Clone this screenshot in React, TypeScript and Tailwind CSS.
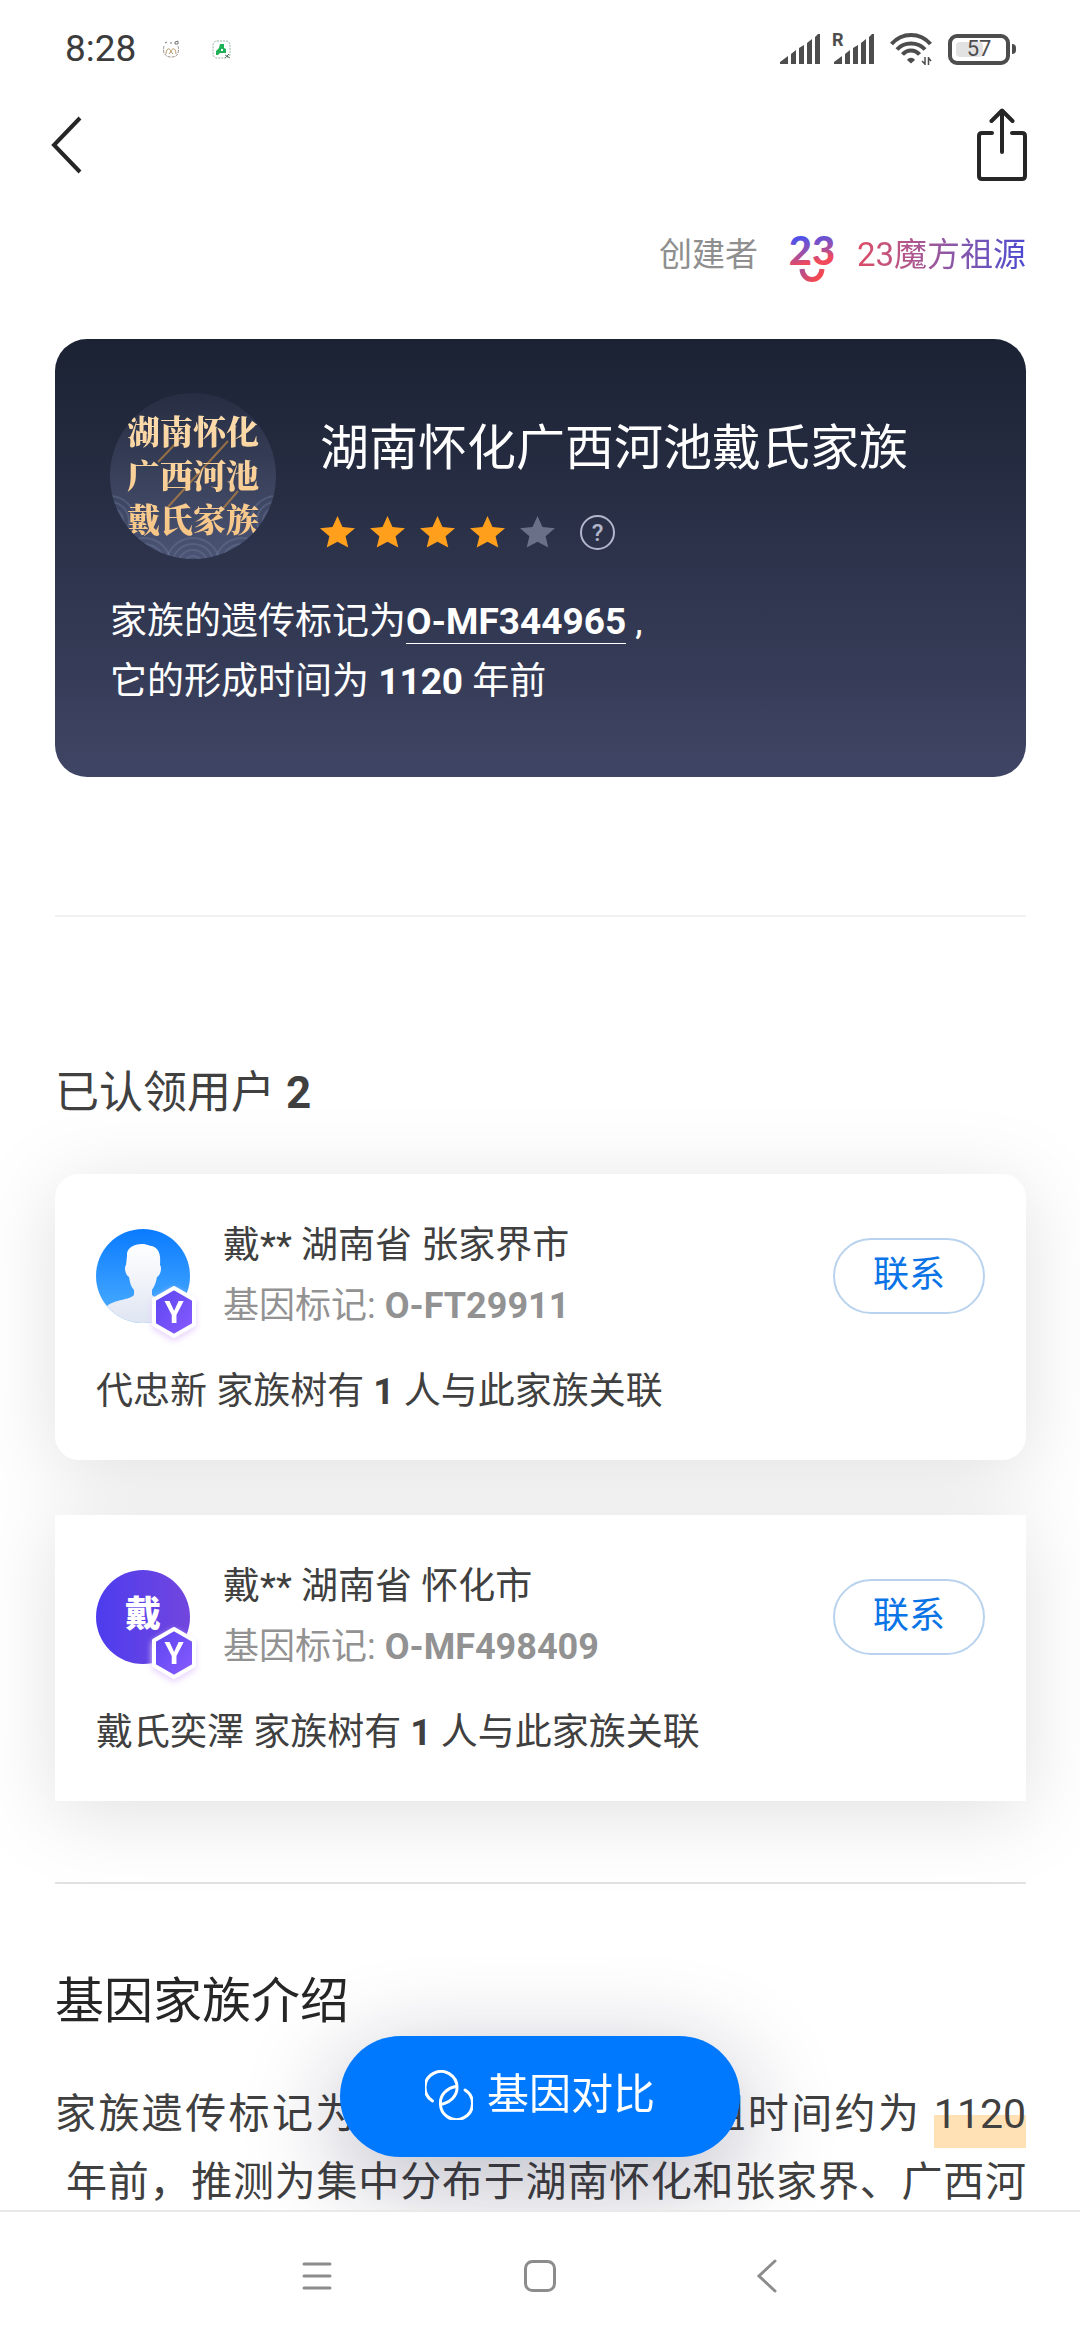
import type { ReactNode } from "react";
import clsx from "clsx";

interface Member {
  name: string;
  marker: string;
  treeOwner: string;
  avatar: ReactNode;
}

const members: Member[] = [
  {
    name: "戴** 湖南省 张家界市",
    marker: "O-FT29911",
    treeOwner: "代忠新",
    avatar: <PersonAvatar />,
  },
  {
    name: "戴** 湖南省 怀化市",
    marker: "O-MF498409",
    treeOwner: "戴氏奕澤",
    avatar: <SurnameAvatar surname="戴" />,
  },
];

function SignalBars() {
  return (
    <svg width="40" height="30" viewBox="0 0 40 30" fill="#4d4d4d">
      <path d="M0 30V28L8 22V30ZM11 30V20L16 16V30ZM19 30V14L24 11V30ZM27 30V9L32 5V30ZM35 30V3L38 0H40V30Z" />
    </svg>
  );
}

function StatusBar() {
  return (
    <div className="flex h-[98px] items-center justify-between pr-16 pl-[65px]">
      <div className="flex items-center">
        <span className="text-[37px] text-[#3c3c3c]">8:28</span>
        <svg className="ml-[26px]" width="18" height="18" viewBox="0 0 18 18" fill="none" stroke="#9a928c">
          <path d="M2 6Q1 9 2 13Q4 17 9 17Q15 17 16 13Q17 9 16 6" strokeDasharray="3 1" />
          <path d="M4 14C4 8 8 7 9 12C10 7 14 8 14 14M7 14Q9 10 11 14" stroke="#b59a6a" />
          <path d="M3 3L5 2M8 3H10M13 2L16 1V4L13 4Z" stroke="#777" />
        </svg>
        <svg className="ml-8" width="19" height="19" viewBox="0 0 19 19" fill="none">
          <rect x="1" y="1" width="17" height="17" rx="4" stroke="#9bb3a4" strokeDasharray="2 1" />
          <path d="M8 4H12V8L14 9V13H8L6 15H4V11L7 8Z" fill="#1fb155" />
          <path d="M9 9H11V11H9Z" fill="#fff" />
          <path d="M13 15L18 18M13 18L17 14" stroke="#5b7a68" />
        </svg>
      </div>
      <div className="flex items-center">
        <SignalBars />
        <div className="relative ml-3.5">
          <SignalBars />
          <span className="absolute -top-1 -left-0.5 text-lg leading-5 font-bold text-[#4d4d4d]">R</span>
        </div>
        <svg className="ml-4" width="42" height="34" viewBox="0 0 42 34" fill="none" stroke="#4d4d4d" strokeWidth="4">
          <path d="M1.500 12C12 0 30 0 40.500 12" />
          <path d="M7 17.500C14 9.500 28 9.500 35 17.500" />
          <path d="M12.500 22.500C17 17 25 17 29.500 22.500" />
          <path d="M17 28C19 25 23 25 25 28L21 31.500Z" fill="#4d4d4d" stroke="none" />
          <path d="M35 25V33M35 32L32 29M38.500 33V25M38.500 26L41 29" strokeWidth="1.500" />
        </svg>
        <div className="ml-4 flex items-center gap-0.5">
          <div className="relative flex h-[31px] w-[62px] items-center justify-center rounded-[9px] border-4 border-[#4d4d4d]">
            <div className="absolute inset-y-1 left-1 w-[27px] rounded-sm bg-[#e2e2e2]" />
            <span className="relative text-[22px] leading-none text-[#4d4d4d]">57</span>
          </div>
          <div className="h-[10px] w-1 rounded-r bg-[#4d4d4d]" />
        </div>
      </div>
    </div>
  );
}

function Header() {
  return (
    <header className="flex h-[94px] items-center justify-between pr-[53px] pl-[51px] text-[#262626]">
      <button type="button" aria-label="返回">
        <svg width="31" height="58" viewBox="0 0 31 58" fill="none" stroke="currentColor" strokeWidth="4">
          <path d="M29 2L3 29L29 56" />
        </svg>
      </button>
      <button type="button" aria-label="分享">
        <svg
          width="50"
          height="74"
          viewBox="0 0 50 74"
          fill="none"
          stroke="currentColor"
          strokeWidth="4"
          strokeLinecap="round"
          strokeLinejoin="round"
        >
          <path d="M15 25H5Q2 25 2 28V68Q2 71 5 71H45Q48 71 48 68V28Q48 25 45 25H35" />
          <path d="M25 44V3M14.500 13L25 2.500L35.500 13" />
        </svg>
      </button>
    </header>
  );
}

function BrandLogo() {
  return (
    <svg width="48" height="66" viewBox="0 0 48 66">
      <defs>
        <linearGradient id="brand" x1="0" y1="0.200" x2="0.200" y2="1">
          <stop offset="0" stopColor="#3a50fa" />
          <stop offset="0.450" stopColor="#8a52b8" />
          <stop offset="0.800" stopColor="#f04a5c" />
        </linearGradient>
        <linearGradient id="smile" x1="0" y1="0" x2="1" y2="0.500">
          <stop offset="0" stopColor="#b04f92" />
          <stop offset="1" stopColor="#f5484f" />
        </linearGradient>
      </defs>
      <text x="24" y="43" textAnchor="middle" fill="url(#brand)" className="font-[Lato] text-[40px] font-black">
        23
      </text>
      <path d="M14 47C15 61 33 61 34 47" fill="none" stroke="url(#smile)" strokeWidth="5" />
    </svg>
  );
}

function FamilyAvatar() {
  return (
    <div className="relative flex size-[166px] shrink-0 items-center justify-center overflow-hidden rounded-full bg-linear-to-b from-[#272e43] to-[#4b5474]">
      <svg className="absolute inset-0" viewBox="0 0 166 166" fill="none">
        <g stroke="#7480a0" strokeOpacity="0.350" strokeWidth="2">
          {[-4, 34, 83, 132, 170].map((cx) => (
            <g key={cx}>
              <circle cx={cx} cy="172" r="27" />
              <circle cx={cx} cy="172" r="21" />
              <circle cx={cx} cy="172" r="15" />
              <circle cx={cx} cy="172" r="9" />
            </g>
          ))}
          {[0, 166].map((cx) => (
            <g key={cx}>
              <circle cx={cx} cy="128" r="25" />
              <circle cx={cx} cy="128" r="19" />
              <circle cx={cx} cy="128" r="13" />
            </g>
          ))}
        </g>
        <path d="M70 46L48 69M118 48L57 115M128 98L104 126" stroke="#c98a3c" strokeOpacity="0.650" strokeWidth="2" />
      </svg>
      <p className="relative bg-linear-to-b from-[#fcdcae] to-[#f7c483] bg-clip-text pb-1 text-center font-['Noto_Serif_CJK_SC','Noto_Sans_CJK_SC',serif] text-[33px] leading-11 font-black text-transparent">
        湖南怀化
        <br />
        广西河池
        <br />
        戴氏家族
      </p>
    </div>
  );
}

function Star({ filled }: { filled: boolean }) {
  return (
    <svg
      width="35"
      height="35"
      viewBox="0 0 35 35"
      className={clsx(filled ? "fill-[#ff9f1c]" : "fill-[#697087]")}
    >
      <path d="M17.500 1L22.500 12L35 13.200L25.600 21.300L28.300 32.500L17.500 26.700L6.700 32.500L9.400 21.300L0 13.200L12.500 12Z" />
    </svg>
  );
}

function FamilyCard() {
  return (
    <section className="mt-[51px] rounded-[32px] bg-linear-to-b from-[#1b2233] to-[#3f4564] px-[55px] pt-[54px] pb-[65px] text-white">
      <div className="flex gap-11">
        <FamilyAvatar />
        <div className="pt-6">
          <h1 className="text-[49px] leading-16 whitespace-nowrap">湖南怀化广西河池戴氏家族</h1>
          <div className="mt-[34px] flex items-center gap-[15px]">
            {[1, 2, 3, 4, 5].map((n) => (
              <Star key={n} filled={n <= 4} />
            ))}
            <button
              type="button"
              aria-label="星级说明"
              className="ml-2.5 flex size-[35px] items-center justify-center rounded-full border-2 border-[#b3b7cc] text-2xl leading-none font-medium text-[#b3b7cc]"
            >
              ?
            </button>
          </div>
        </div>
      </div>
      <p className="mt-[33px] text-[37px] leading-[60px]">
        家族的遗传标记为
        <a href="#marker" className="border-b border-white font-bold">
          O-MF344965
        </a>{" "}
        ,
        <br />
        它的形成时间为 <b>1120</b> 年前
      </p>
    </section>
  );
}

function PersonAvatar() {
  return (
    <svg width="94" height="94" viewBox="0 0 94 94">
      <defs>
        <linearGradient id="sky" x1="0" y1="0" x2="0" y2="1">
          <stop offset="0" stopColor="#0a7bff" />
          <stop offset="1" stopColor="#4fb0ff" />
        </linearGradient>
        <linearGradient id="person" x1="0" y1="0" x2="0" y2="1">
          <stop offset="0" stopColor="#ffffff" />
          <stop offset="1" stopColor="#dfe5f2" />
        </linearGradient>
        <clipPath id="round">
          <circle cx="47" cy="47" r="47" />
        </clipPath>
      </defs>
      <g clipPath="url(#round)">
        <rect width="94" height="94" fill="url(#sky)" />
        <path
          d="M31 27C30 19 38 15 46 15C51 15 53 17 56 17C63 19 65 26 64 36C66 38 65 46 61 48C60 54 58 58 56 61V66C60 71 84 70 88 80V94H6V84C10 70 33 72 38 66V61C35 58 34 54 33 48C29 46 28 38 30 36Z"
          fill="url(#person)"
        />
      </g>
    </svg>
  );
}

function SurnameAvatar({ surname }: { surname: string }) {
  return (
    <div className="flex size-[94px] items-center justify-center rounded-full bg-linear-to-r from-[#4c3cee] to-[#7245de] pb-1 text-4xl font-black text-white">
      {surname}
    </div>
  );
}

function HaplogroupBadge() {
  return (
    <svg className="absolute -right-2 -bottom-4 drop-shadow-md drop-shadow-purple-200" width="48" height="54" viewBox="0 0 48 54">
      <defs>
        <linearGradient id="hex" x1="0" y1="0" x2="1" y2="1">
          <stop offset="0" stopColor="#5a45f0" />
          <stop offset="1" stopColor="#8a5cff" />
        </linearGradient>
      </defs>
      <path d="M24 3L44 14.500V39.500L24 51L4 39.500V14.500Z" fill="url(#hex)" stroke="#fff" strokeWidth="4" strokeLinejoin="round" />
      <text x="24" y="38" textAnchor="middle" fill="#fff" className="text-[31px] font-bold">
        Y
      </text>
    </svg>
  );
}

function MemberCard({ member, rounded }: { member: Member; rounded: boolean }) {
  return (
    <li
      className={clsx(
        "bg-white px-[41px] pt-[42px] pb-[38px] text-[37px] leading-[60px] text-[#404040]",
        rounded && "rounded-3xl"
      )}
    >
      <div className="flex items-center">
        <div className="relative shrink-0">
          {member.avatar}
          <HaplogroupBadge />
        </div>
        <div className="ml-[33px] flex-1">
          <p>{member.name}</p>
          <p className="text-4xl leading-[60px] text-[#929292]">
            基因标记: <b>{member.marker}</b>
          </p>
        </div>
        <button
          type="button"
          className="flex h-[76px] w-[152px] items-center justify-center rounded-full border-2 border-[#b9d3ee] pb-0.5 text-4xl text-[#0a74e6]"
        >
          联系
        </button>
      </div>
      <p className="mt-[26px]">
        {member.treeOwner} 家族树有 <b>1</b> 人与此家族关联
      </p>
    </li>
  );
}

function CompareButton() {
  return (
    <button
      type="button"
      className="absolute bottom-[53px] left-1/2 flex h-[121px] w-[400px] -translate-x-1/2 items-center justify-center gap-3.5 rounded-full bg-[#0079ff] pb-1 text-[42px] text-white shadow-[0_24px_100px_rgba(20,20,60,0.3)]"
    >
      <svg width="48" height="50" viewBox="0 0 48 50" fill="none" stroke="currentColor" strokeWidth="3" strokeLinecap="round">
        <path d="M7.500 31A16 16 0 1 1 32 18C32 26 25 33 15.500 34.500" />
        <path d="M40 20A16 16 0 1 1 15.500 33C15 25 22 18 31 16.500" />
      </svg>
      基因对比
    </button>
  );
}

function NavigationBar() {
  return (
    <nav className="relative z-10 flex h-[130px] items-center justify-center gap-[192px] border-t-2 border-[#e9e9e9] bg-white text-[#8c8c8c]">
      <button type="button" aria-label="最近任务">
        <svg width="30" height="34" viewBox="0 0 30 34" stroke="currentColor" strokeWidth="3" strokeLinecap="round">
          <path d="M2 5H28M2 17H28M2 29H28" />
        </svg>
      </button>
      <button type="button" aria-label="主屏幕">
        <svg width="32" height="34" viewBox="0 0 32 34" fill="none" stroke="currentColor" strokeWidth="3">
          <rect x="1.500" y="2.500" width="29" height="29" rx="7" />
        </svg>
      </button>
      <button type="button" aria-label="返回上一页">
        <svg width="30" height="34" viewBox="0 0 30 34" fill="none" stroke="currentColor" strokeWidth="3" strokeLinecap="round">
          <path d="M27 2L11 17L27 32" />
        </svg>
      </button>
    </nav>
  );
}

export default function App() {
  return (
    <div className="flex h-screen flex-col bg-white font-[Roboto,'Noto_Sans_CJK_SC',sans-serif] text-[#404040]">
      <div className="relative min-h-0 flex-1">
        <div className="h-full overflow-y-auto [scrollbar-width:none]">
          <StatusBar />
          <Header />
          <main className="pr-[54px] pl-[55px]">
            <div className="mt-[30px] flex h-[66px] items-center justify-end text-[33px]">
              <span className="text-[#8f8f8f]">创建者</span>
              <div className="mr-[21px] ml-[30px]">
                <BrandLogo />
              </div>
              <a href="#creator" className="bg-linear-to-r from-[#dd4a64] to-[#4a48d0] bg-clip-text text-transparent">
                23魔方祖源
              </a>
            </div>

            <FamilyCard />

            <hr className="mt-[138px] border-t-2 border-[#f1f1f1]" />

            <section>
              <h2 className="mt-36 text-[44px] leading-16">
                已认领用户 <b>2</b>
              </h2>
              <ul className="mt-[49px] flex flex-col gap-[55px] drop-shadow-[0_12px_40px_rgba(0,0,0,0.12)]">
                {members.map((member, index) => (
                  <MemberCard key={member.marker} member={member} rounded={index === 0} />
                ))}
              </ul>
            </section>

            <hr className="mt-[81px] border-t-2 border-[#e2e2e2]" />

            <section>
              <h2 className="mt-[86px] text-[49px] leading-16 text-[#262626]">基因家族介绍</h2>
              <p className="mt-[46px] text-justify text-[41px] leading-[68px] [text-align-last:justify]">
                家族遗传标记为 <b>O-MF344965</b>，共祖时间约为{" "}
                <span className="inline-block bg-linear-to-b from-transparent from-52% to-[#ffe1b5] to-52%">1120</span>
                &nbsp;年前，推测为集中分布于湖南怀化和张家界、广西河
              </p>
            </section>
          </main>
        </div>
        <CompareButton />
      </div>
      <NavigationBar />
    </div>
  );
}
